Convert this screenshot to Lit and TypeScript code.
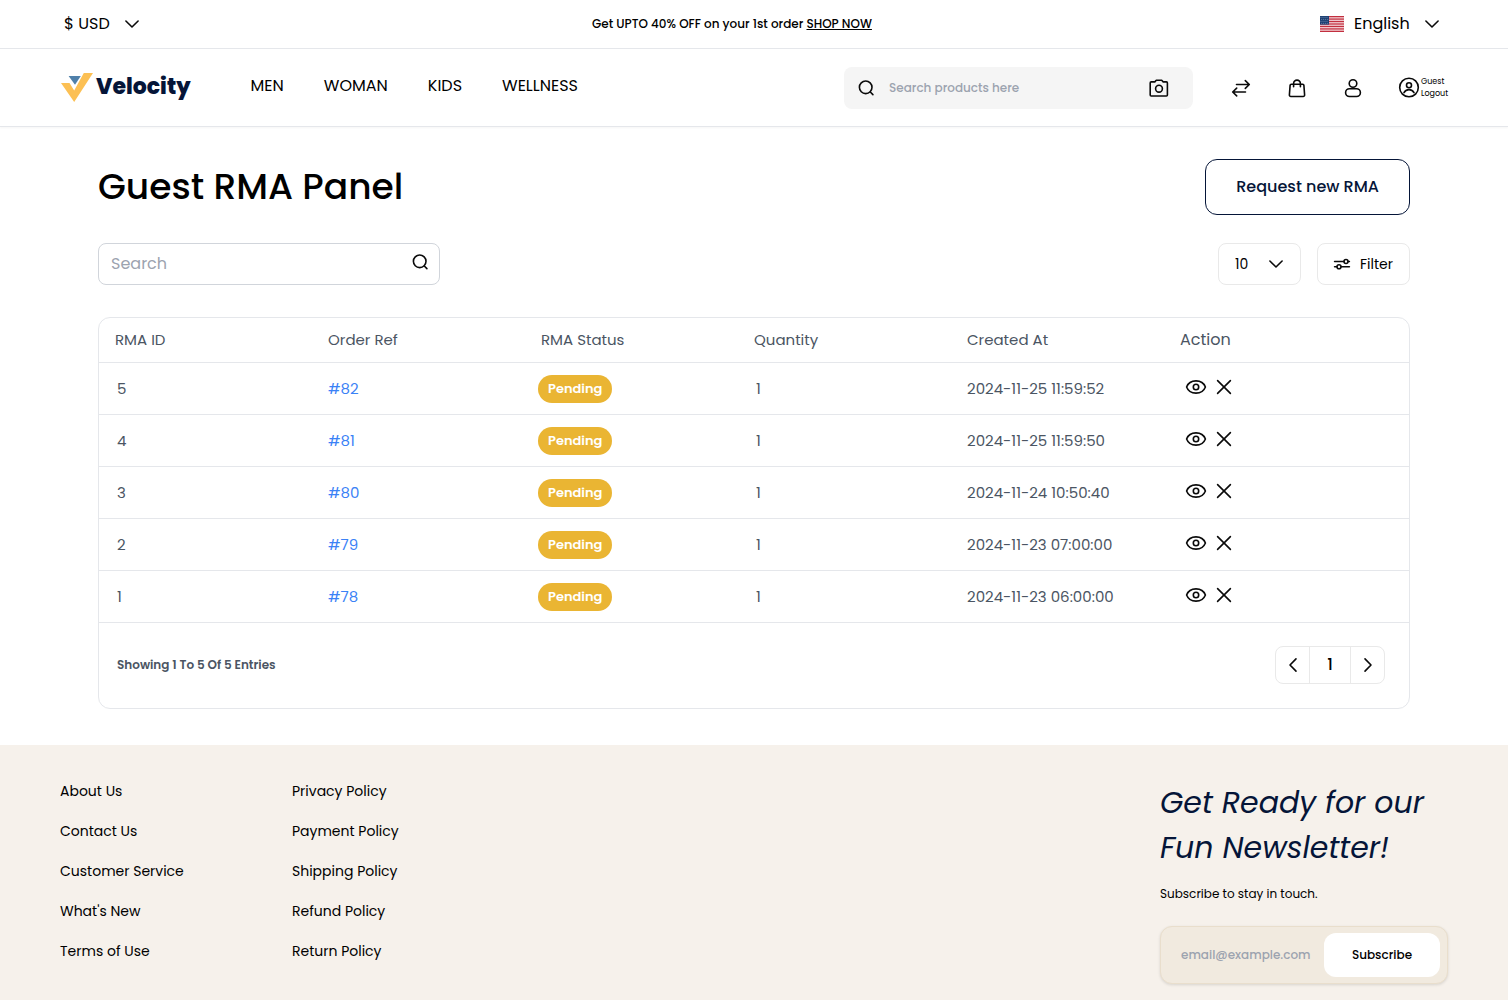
import { LitElement, html, css, svg } from "lit";
import { customElement, state } from "lit/decorators.js";

interface Rma {
  id: number;
  order: string;
  status: string;
  quantity: number;
  created: string;
}

const ROWS: Rma[] = [
  { id: 5, order: "#82", status: "Pending", quantity: 1, created: "2024-11-25 11:59:52" },
  { id: 4, order: "#81", status: "Pending", quantity: 1, created: "2024-11-25 11:59:50" },
  { id: 3, order: "#80", status: "Pending", quantity: 1, created: "2024-11-24 10:50:40" },
  { id: 2, order: "#79", status: "Pending", quantity: 1, created: "2024-11-23 07:00:00" },
  { id: 1, order: "#78", status: "Pending", quantity: 1, created: "2024-11-23 06:00:00" },
];

const CATEGORIES = ["MEN", "WOMAN", "KIDS", "WELLNESS"];

const FOOTER_LINKS = [
  ["About Us", "Contact Us", "Customer Service", "What's New", "Terms of Use"],
  ["Privacy Policy", "Payment Policy", "Shipping Policy", "Refund Policy", "Return Policy"],
];

const ICONS = {
  down: svg`<path d="M5.900 9 12 15l6.100-6"/>`,
  left: svg`<path d="M15 5.900 9 12l6 6.100"/>`,
  right: svg`<path d="M9 5.900l6 6.100-6 6.100"/>`,
  search: svg`<circle cx="11.700" cy="11.300" r="6.300"/><path d="m16.300 16 2.600 2.600"/>`,
  camera: svg`<path d="M4.600 5.900h3.200l1.500-1.600h5.400l1.500 1.600h3.200a1 1 0 0 1 1 1v12.100a1 1 0 0 1-1 1H4.200a1 1 0 0 1-1-1V6.900a1 1 0 0 1 1-1Z"/><circle cx="12" cy="12.700" r="3.400"/>`,
  compare: svg`<path d="M7.500 8.500h12.700M16.300 4.600l4 3.900-4 3.900M16.500 16H3.800M7.700 12.100l-4 3.900 4 3.900"/>`,
  bag: svg`<path d="M6.300 8.300h11.400a1.200 1.200 0 0 1 1.200 1.100l.7 9.400a1.500 1.500 0 0 1-1.500 1.700H5.900a1.500 1.500 0 0 1-1.500-1.700l.7-9.400a1.200 1.200 0 0 1 1.200-1.100Z"/><path d="M8.600 10.800V7.500a3.400 3.400 0 0 1 6.800 0v3.300"/>`,
  user: svg`<circle cx="12" cy="7.500" r="3.800"/><rect x="4.600" y="12.800" width="14.800" height="7.700" rx="3.850"/>`,
  guest: svg`<circle cx="12" cy="11.500" r="9.300"/><circle cx="12" cy="9.200" r="2.500"/><path d="M7 16.700c1-2.100 2.800-3.100 5-3.100s4 1 5 3.100"/>`,
  filter: svg`<path d="M4.600 9.500h9.200M18.200 9.500h1.200M4.600 14.800h2.200M11.200 14.800h8.200"/><circle cx="16" cy="9.500" r="2"/><circle cx="9" cy="14.800" r="2"/>`,
  eye: svg`<path d="M2.600 12c1.500-4 5-6.100 9.400-6.100s7.900 2.100 9.400 6.100c-1.500 4-5 6.100-9.400 6.100S4.100 16 2.600 12Z"/><circle cx="12" cy="12" r="2.700"/>`,
  cross: svg`<path d="m5.600 5.600 12.800 12.800M18.400 5.600 5.600 18.400"/>`,
};

const icon = (name: keyof typeof ICONS) =>
  html`<svg class="icon" viewBox="0 0 24 24" aria-hidden="true">${ICONS[name]}</svg>`;

const logoMark = html`<svg class="logo-mark" viewBox="0 0 32 32" aria-hidden="true">
  <path fill="#fcc054" d="M1 12h8.500l4.700 7.600L23.800 2H33L14.200 31Z" />
  <path fill="#4f80aa" d="M8.600 5h12.200l-5.800 8.800Z" />
</svg>`;

const flag = html`<svg class="flag" viewBox="0 0 24 16" aria-hidden="true">
  <rect width="24" height="16" fill="#f3d3d7" />
  ${[0, 1, 2, 3, 4, 5, 6].map(
    (i) => svg`<rect y=${(i * 32) / 13} width="24" height=${16 / 13} fill="#c22f3f" />`,
  )}
  <rect width="9" height="8.600" fill="#1c3f72" />
  ${[0, 1, 2, 3].map((r) =>
    [0, 1, 2, 3].map(
      (c) => svg`<circle cx=${1 + c * 2 + (r % 2) * 0.8} cy=${1.2 + r * 2} r=".450" fill="#b9c9dd" />`,
    ),
  )}
</svg>`;

@customElement("app-root")
export class AppRoot extends LitElement {
  @state() private query = "";

  static styles = css`
    :host {
      --navy: #051538;
      display: block;
      min-height: 100vh;
      background: #fff;
      color: #000;
      font-family: Poppins, Inter, "Noto Sans", sans-serif;
      font-size: 16px;
      line-height: 24px;
    }
    * { box-sizing: border-box; }
    a { color: inherit; text-decoration: none; }
    button, input, select {
      margin: 0;
      font: inherit;
      color: inherit;
      background: none;
      border: 0;
      padding: 0;
      outline-offset: 2px;
    }
    button { cursor: pointer; }
    ul { list-style: none; margin: 0; padding: 0; }
    h1, h2, p { margin: 0; font-weight: 400; }
    input::placeholder { color: #9ca3af; opacity: 1; }
    .icon {
      display: block;
      flex: none;
      width: 24px;
      height: 24px;
      fill: none;
      stroke: #0a0a0a;
      stroke-width: 1.6;
      stroke-linecap: round;
      stroke-linejoin: round;
    }
    .icon-button { display: block; }

    .topbar {
      display: flex;
      justify-content: space-between;
      align-items: center;
      height: 49px;
      padding: 0 64px;
      border-bottom: 1px solid #e5e7eb;
    }
    .promo { font-size: 12px; font-weight: 500; }
    .promo a { text-decoration: underline; }
    .picker { display: grid; align-items: center; width: max-content; }
    .picker select, .picker .icon { grid-area: 1 / 1; }
    .picker select {
      appearance: none;
      padding-right: 34px;
      cursor: pointer;
    }
    .picker .icon { justify-self: end; pointer-events: none; }
    .language { display: flex; align-items: center; gap: 10px; }
    .flag { display: block; width: 24px; height: 16px; }

    .header {
      display: flex;
      align-items: center;
      height: 78px;
      padding: 0 60px;
      border-bottom: 1px solid #e5e7eb;
      box-shadow: 0 1px 2px rgb(0 0 0 / 4%);
    }
    .logo {
      display: flex;
      align-items: center;
      gap: 4px;
      padding-bottom: 2px;
      color: var(--navy);
      font-size: 22px;
      font-weight: 800;
    }
    .logo-mark { width: 32px; height: 32px; overflow: visible; }
    .menu { display: flex; gap: 40px; padding: 0 0 4px 60px; }
    .site-search {
      display: flex;
      align-items: center;
      flex: 0 1 349px;
      height: 42px;
      margin-left: auto;
      padding: 0 22px 0 10px;
      gap: 11px;
      background: #f5f5f5;
      border-radius: 8px;
    }
    .site-search input {
      flex: 1;
      min-width: 0;
      font-size: 12px;
      font-weight: 500;
    }
    .tools { display: flex; align-items: center; gap: 32px; padding-left: 36px; }
    .guest { display: flex; align-items: center; }
    .guest-text { display: grid; width: 27px; font-size: 8px; line-height: 12px; }

    main { padding: 32px 98px 36px; }
    .title-row, .toolbar, .toolbar-end {
      display: flex;
      align-items: center;
      justify-content: space-between;
    }
    h1 { font-size: 36px; line-height: 56px; font-weight: 500; }
    .primary {
      height: 56px;
      padding: 0 30px;
      border: 1px solid var(--navy);
      border-radius: 12px;
      color: var(--navy);
      font-weight: 500;
    }
    .toolbar { padding: 28px 0 32px; }
    .toolbar-end { gap: 16px; font-size: 14px; }
    .table-search {
      display: flex;
      align-items: center;
      flex: 0 1 342px;
      min-width: 0;
      height: 42px;
      padding: 0 7px 0 12px;
      border: 1px solid #d1d5db;
      border-radius: 8px;
    }
    .table-search input { flex: 1; min-width: 0; }
    .table-search .icon { margin-bottom: 4px; }
    .boxed {
      height: 42px;
      border: 1px solid #e9e9e9;
      border-radius: 8px;
    }
    .page-size { width: 83px; padding: 0 12px 0 16px; }
    .filter { display: flex; align-items: center; gap: 6px; padding: 0 16px 0 12px; }

    .card { border: 1px solid #e5e7eb; border-radius: 12px; color: #4b5563; font-size: 15px; }
    table, thead, tbody { display: block; }
    tr {
      display: grid;
      grid-template-columns: repeat(6, 1fr);
      align-items: center;
      height: 52px;
      padding: 0 16px;
      border-bottom: 1px solid #e5e7eb;
    }
    thead tr { height: 45px; }
    th { padding: 0; text-align: left; font-weight: 400; }
    th:last-child { font-size: 16px; }
    td { padding: 0; }
    .col-id, .col-quantity { padding-left: 2px; }
    .col-action { display: flex; gap: 4px; padding: 0 0 4px 4px; }
    .order { color: #3b82f6; }
    .badge {
      display: inline-block;
      margin-left: -3px;
      padding: 0 10px;
      border-radius: 14px;
      background: #eab533;
      color: #fff;
      font-size: 13px;
      line-height: 28px;
      font-weight: 600;
      vertical-align: middle;
    }
    .card-foot {
      display: flex;
      align-items: center;
      justify-content: space-between;
      height: 85px;
      padding: 0 24px 2px 18px;
    }
    .summary { font-size: 12px; font-weight: 600; }
    .pager {
      display: flex;
      height: 38px;
      border: 1px solid #e9e9e9;
      border-radius: 8px;
      color: #000;
      font-weight: 500;
    }
    .pager > * { display: grid; place-items: center; width: 33px; }
    .pager .page {
      width: 42px;
      border: solid #e9e9e9;
      border-width: 0 1px;
      font-size: 16px;
    }

    footer {
      display: flex;
      justify-content: space-between;
      min-height: 255px;
      padding: 35px 60px 15px;
      background: #f6f1eb;
    }
    .link-columns { display: flex; font-size: 14px; line-height: 22px; }
    .link-columns ul { display: grid; align-content: start; gap: 18px; min-width: 232px; }
    .newsletter { width: 288px; }
    h2 { color: var(--navy); font-size: 30px; line-height: 45px; font-style: italic; white-space: nowrap; }
    .newsletter p { padding: 12px 0 20px; font-size: 12px; }
    .subscribe {
      display: flex;
      align-items: center;
      height: 58px;
      padding: 0 7px 0 20px;
      border: 1px solid #e9decc;
      border-radius: 12px;
      background: #f1eadf;
      box-shadow: 0 1px 3px rgb(0 0 0 / 12%);
      font-size: 12px;
      font-weight: 500;
    }
    .subscribe input { flex: 1; min-width: 0; }
    .subscribe button {
      width: 116px;
      height: 44px;
      border-radius: 12px;
      background: #fff;
    }
  `;

  private get rows() {
    const q = this.query.trim().toLowerCase();
    return ROWS.filter((r) => `${r.id} ${r.order} ${r.status} ${r.created}`.toLowerCase().includes(q));
  }

  private renderRow(r: Rma) {
    return html`<tr>
      <td class="col-id">${r.id}</td>
      <td><a class="order" href="#order">${r.order}</a></td>
      <td><span class="badge">${r.status}</span></td>
      <td class="col-quantity">${r.quantity}</td>
      <td>${r.created}</td>
      <td class="col-action">
        <button class="icon-button" aria-label="View">${icon("eye")}</button>
        <button class="icon-button" aria-label="Cancel">${icon("cross")}</button>
      </td>
    </tr>`;
  }

  render() {
    return html`
      <div class="topbar">
        <div class="picker">
          <select aria-label="Currency"><option>$ USD</option></select>
          ${icon("down")}
        </div>
        <p class="promo">Get UPTO 40% OFF on your 1st order <a href="#shop">SHOP NOW</a></p>
        <div class="language">
          ${flag}
          <div class="picker">
            <select aria-label="Language"><option>English</option></select>
            ${icon("down")}
          </div>
        </div>
      </div>

      <header class="header">
        <a class="logo" href="#home">${logoMark}<span>Velocity</span></a>
        <nav class="menu">${CATEGORIES.map((c) => html`<a href="#category">${c}</a>`)}</nav>
        <form class="site-search" role="search">
          ${icon("search")}
          <input type="text" aria-label="Search products" placeholder="Search products here" />
          <button type="button" class="icon-button" aria-label="Search by image">${icon("camera")}</button>
        </form>
        <div class="tools">
          <a href="#compare" aria-label="Compare">${icon("compare")}</a>
          <button class="icon-button" aria-label="Cart">${icon("bag")}</button>
          <button class="icon-button" aria-label="Profile">${icon("user")}</button>
          <a class="guest" href="#logout">
            ${icon("guest")}
            <span class="guest-text"><span>Guest</span><span>Logout</span></span>
          </a>
        </div>
      </header>

      <main>
        <div class="title-row">
          <h1>Guest RMA Panel</h1>
          <button class="primary">Request new RMA</button>
        </div>
        <div class="toolbar">
          <div class="table-search">
            <input
              type="text"
              aria-label="Search"
              placeholder="Search"
              @input=${(e: Event) => (this.query = (e.target as HTMLInputElement).value)}
            />
            ${icon("search")}
          </div>
          <div class="toolbar-end">
            <div class="picker boxed page-size">
              <select aria-label="Rows per page"><option>10</option></select>
              ${icon("down")}
            </div>
            <button class="boxed filter">${icon("filter")}<span>Filter</span></button>
          </div>
        </div>

        <section class="card">
          <table>
            <thead>
              <tr>
                <th>RMA ID</th>
                <th>Order Ref</th>
                <th>RMA Status</th>
                <th>Quantity</th>
                <th>Created At</th>
                <th>Action</th>
              </tr>
            </thead>
            <tbody>${this.rows.map((r) => this.renderRow(r))}</tbody>
          </table>
          <div class="card-foot">
            <span class="summary">Showing 1 To 5 Of 5 Entries</span>
            <nav class="pager" aria-label="Pages">
              <button aria-label="Previous page">${icon("left")}</button>
              <a class="page" href="#page">1</a>
              <button aria-label="Next page">${icon("right")}</button>
            </nav>
          </div>
        </section>
      </main>

      <footer>
        <div class="link-columns">
          ${FOOTER_LINKS.map(
            (col) => html`<ul>${col.map((l) => html`<li><a href="#info">${l}</a></li>`)}</ul>`,
          )}
        </div>
        <div class="newsletter">
          <h2>Get Ready for our<br />Fun Newsletter!</h2>
          <p>Subscribe to stay in touch.</p>
          <form class="subscribe">
            <input type="email" aria-label="Email" placeholder="email@example.com" />
            <button type="button">Subscribe</button>
          </form>
        </div>
      </footer>
    `;
  }
}
